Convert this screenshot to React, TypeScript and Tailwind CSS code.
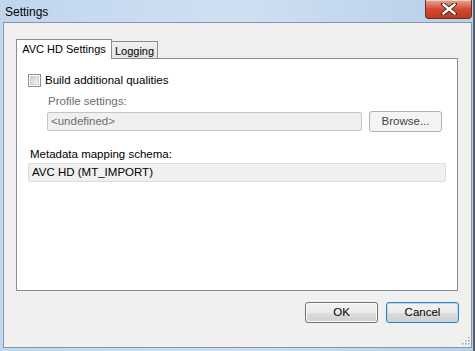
import { useState } from 'react';

const font = { fontFamily: '"Liberation Sans", Arial, sans-serif' };

function CloseButton() {
  return (
    <div className="w-[47px] h-[19px] rounded-b-[4px] border border-t-0 border-[#6b2b24] bg-gradient-to-b from-[#e8a493] via-[#cf4b32] to-[#c0391f] shadow-[inset_0_1px_0_rgba(255,255,255,0.5)] flex items-center justify-center">
      <svg width="16" height="12" viewBox="0 0 16 12">
        <path
          d="M2 1 L14 11 M14 1 L2 11"
          stroke="#4b1d16"
          strokeWidth="4.2"
          strokeLinecap="square"
        />
        <path
          d="M2.5 1.5 L13.5 10.5 M13.5 1.5 L2.5 10.5"
          stroke="#ffffff"
          strokeWidth="2.4"
          strokeLinecap="square"
        />
      </svg>
    </div>
  );
}

function Button({ label, focused, disabled }: { label: string; focused?: boolean; disabled?: boolean }) {
  return (
    <div
      className={`w-[73px] h-[21px] rounded-[3px] border flex items-center justify-center text-[11.5px] ${
        focused
          ? 'border-[#3c7fb1] shadow-[inset_0_0_0_1px_#a9dcf6] bg-[linear-gradient(#f2f2f2_0%,#ebebeb_50%,#dddddd_50%,#cfcfcf_100%)] text-black'
          : disabled
          ? 'border-[#adb2b5] bg-[#f4f4f4] text-[#444]'
          : 'border-[#707070] shadow-[inset_0_0_0_1px_#fbfbfb] bg-[linear-gradient(#f2f2f2_0%,#ebebeb_50%,#dddddd_50%,#cfcfcf_100%)] text-black'
      }`}
    >
      {label}
    </div>
  );
}

export default function App() {
  const [checked, setChecked] = useState(false);

  return (
    <div
      className="relative w-[475px] h-[351px] overflow-hidden bg-gradient-to-r from-[#c0d6ee] via-[#cfe0f2] to-[#b7cfe9] border-r-2 border-[#55606c] text-[11.5px] text-black"
      style={font}
    >
      {/* Title bar */}
      <div className="h-[22px] flex justify-between">
        <span className="pl-[5px] pt-[5px] text-[12px] leading-[14px] text-black">Settings</span>
        <div className="mr-[1px]">
          <CloseButton />
        </div>
      </div>

      {/* Client area */}
      <div className="ml-[3px] w-[469px] h-[326px] border border-[#8795a8] bg-[#f0f0f0] flex flex-col">
        {/* Tabs */}
        <div className="ml-[12px] mt-[16px] flex items-end text-[11px]">
          <div className="w-[96px] h-[20px] -mb-px relative z-10 bg-white border border-b-0 border-[#898c95] flex items-center justify-center">
            AVC HD Settings
          </div>
          <div className="w-[46px] h-[17px] border border-l-0 border-b-0 border-[#898c95] bg-gradient-to-b from-[#f2f2f2] to-[#e3e3e3] flex items-center justify-center pt-[2px]">
            Logging
          </div>
        </div>

        {/* Panel */}
        <div className="ml-[12px] w-[442px] h-[233px] border border-[#898c95] bg-white flex flex-col">
          <label className="mt-[14px] ml-[11px] flex items-center gap-[4px] cursor-default">
            <span
              onClick={() => setChecked(!checked)}
              className="w-[13px] h-[13px] border border-[#8e8f8f] bg-white flex items-center justify-center"
            >
              <span className="w-[9px] h-[9px] bg-gradient-to-br from-[#cbcfd5] to-[#f6f6f6] border border-[#b0b4b9]/40" />
            </span>
            <span className="leading-[14px]">Build additional qualities</span>
          </label>

          <div className="ml-[31px] mt-[7px] leading-[14px] text-[#6d6d6d]">Profile settings:</div>

          <div className="ml-[30px] mt-[3px] flex items-center gap-[7px]">
            <div className="w-[315px] h-[19px] rounded-[2px] border border-[#c5c5c5] bg-[#f0f0f0] pl-[3px] flex items-center text-[#6d6d6d]">
              &lt;undefined&gt;
            </div>
            <Button label="Browse..." disabled />
          </div>

          <div className="ml-[13px] mt-[15px] leading-[14px]">Metadata mapping schema:</div>

          <div className="ml-[11px] mt-[2px] w-[418px] h-[19px] rounded-[2px] border border-[#dcdcdc] bg-[#f0f0f0] pl-[3px] flex items-center">
            AVC HD (MT_IMPORT)
          </div>
        </div>

        {/* Buttons */}
        <div className="mt-[11px] mr-[12px] flex justify-end gap-[8px]">
          <Button label="OK" />
          <Button label="Cancel" focused />
        </div>
      </div>

      {/* Size grip */}
      <svg className="absolute left-[461px] top-[336px]" width="9" height="9" viewBox="0 0 9 9">
        {[
          [7, 1],
          [4, 4],
          [7, 4],
          [1, 7],
          [4, 7],
          [7, 7],
        ].map(([x, y], i) => (
          <rect key={i} x={x} y={y} width="1.5" height="1.5" fill="#a0a6ad" />
        ))}
      </svg>
    </div>
  );
}
